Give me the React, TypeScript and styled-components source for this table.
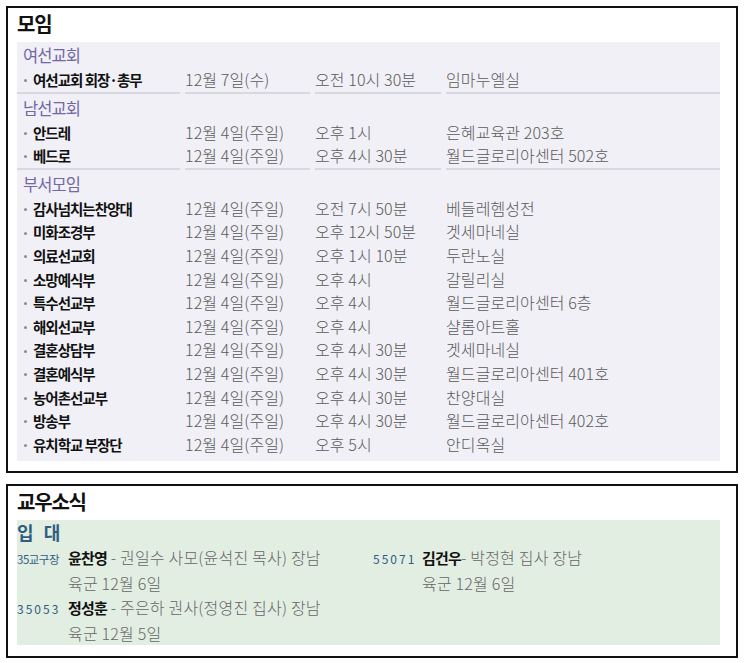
import React from "react";
import styled, { createGlobalStyle } from "styled-components";

const GlobalStyle = createGlobalStyle`
  body {
    margin: 0;
    padding: 6px 7px 6px 6px;
    background: #fff;
    font-family: "Noto Sans CJK KR", "Noto Sans", sans-serif;
  }
`;

const Page = styled.div`
  display: flex;
  flex-direction: column;
  gap: 11px;
  width: 732px;
`;

const Box = styled.section<{ $bottom: number }>`
  border: 2px solid #111;
  padding: 0 16px ${(p) => p.$bottom}px 9px;
`;

const Title = styled.h2`
  margin: 0 0 2px;
  font-size: 20px;
  font-weight: 700;
  line-height: 32px;
  letter-spacing: -1.2px;
  color: #111;
`;

/* 모임 table */
const SchedulePanel = styled.div`
  background: #f0f0f6;
  padding-bottom: 4px;
`;

const Group = styled.div`
  margin-bottom: 1px;
`;

const GroupHead = styled.div`
  height: 26px;
  line-height: 26px;
  padding-left: 6px;
  font-size: 16.5px;
  letter-spacing: -0.9px;
  color: #7367a6;
`;

const Row = styled.div`
  display: grid;
  grid-template-columns: 163px 125px 126px 1fr;
  column-gap: 5px;
`;

const Cell = styled.div<{ $line: boolean }>`
  font-size: 16px;
  font-weight: 300;
  line-height: 23.6px;
  color: #5a5a5a;
  white-space: nowrap;
  letter-spacing: 0.1px;
  border-bottom: ${(p) => (p.$line ? "2px solid #d8d8e0" : "none")};
`;

const NameCell = styled(Cell)`
  display: flex;
  align-items: center;
  padding-left: 7px;
  font-size: 14.5px;
  font-weight: 700;
  color: #111;
  letter-spacing: -1px;

  &::before {
    content: "";
    flex: none;
    width: 3px;
    height: 3px;
    margin: 2px 6px 0 0;
    border-radius: 50%;
    background: #8a8a92;
  }
`;

/* 교우소식 */
const NewsPanel = styled.div`
  background: #e3eee3;
  display: grid;
  grid-template-columns: 356px 1fr;
  align-items: start;
`;

const NewsHead = styled.div`
  grid-column: 1 / -1;
  height: 25px;
  line-height: 25px;
  font-size: 18px;
  font-weight: 700;
  word-spacing: 6px;
  color: #2e5f80;
`;

const NewsColumn = styled.div`
  display: flex;
  flex-direction: column;
`;

const Entry = styled.div<{ $codeWidth: number }>`
  display: grid;
  grid-template-columns: ${(p) => p.$codeWidth}px 1fr;
  align-items: baseline;
  line-height: 24px;
  font-size: 16px;
  font-weight: 300;
  color: #666;
  white-space: nowrap;
  letter-spacing: 0.2px;
`;

const Code = styled.span<{ $compact?: boolean }>`
  font-size: ${(p) => (p.$compact ? 11.5 : 12)}px;
  font-weight: 400;
  letter-spacing: ${(p) => (p.$compact ? "-0.5px" : "2px")};
  color: #2e5f80;
`;

const Name = styled.b`
  font-size: 15px;
  font-weight: 700;
  color: #111;
  letter-spacing: -0.8px;
`;

const Detail = styled.span`
  grid-column: 2;
`;

type Meeting = [string, string, string, string];

const groups: { head: string; rows: Meeting[] }[] = [
  {
    head: "여선교회",
    rows: [["여선교회 회장·총무", "12월 7일(수)", "오전 10시 30분", "임마누엘실"]],
  },
  {
    head: "남선교회",
    rows: [
      ["안드레", "12월 4일(주일)", "오후 1시", "은혜교육관 203호"],
      ["베드로", "12월 4일(주일)", "오후 4시 30분", "월드글로리아센터 502호"],
    ],
  },
  {
    head: "부서모임",
    rows: [
      ["감사넘치는찬양대", "12월 4일(주일)", "오전 7시 50분", "베들레헴성전"],
      ["미화조경부", "12월 4일(주일)", "오후 12시 50분", "겟세마네실"],
      ["의료선교회", "12월 4일(주일)", "오후 1시 10분", "두란노실"],
      ["소망예식부", "12월 4일(주일)", "오후 4시", "갈릴리실"],
      ["특수선교부", "12월 4일(주일)", "오후 4시", "월드글로리아센터 6층"],
      ["해외선교부", "12월 4일(주일)", "오후 4시", "샬롬아트홀"],
      ["결혼상담부", "12월 4일(주일)", "오후 4시 30분", "겟세마네실"],
      ["결혼예식부", "12월 4일(주일)", "오후 4시 30분", "월드글로리아센터 401호"],
      ["농어촌선교부", "12월 4일(주일)", "오후 4시 30분", "찬양대실"],
      ["방송부", "12월 4일(주일)", "오후 4시 30분", "월드글로리아센터 402호"],
      ["유치학교 부장단", "12월 4일(주일)", "오후 5시", "안디옥실"],
    ],
  },
];

const App: React.FC = () => {
  return (
    <>
      <GlobalStyle />
      <Page>
        <Box $bottom={10}>
          <Title>모임</Title>
          <SchedulePanel>
            {groups.map((g, gi) => (
              <Group key={g.head}>
                <GroupHead>{g.head}</GroupHead>
                {g.rows.map((r, ri) => {
                  const line = gi < groups.length - 1 && ri === g.rows.length - 1;
                  return (
                    <Row key={r[0]}>
                      <NameCell $line={line}>{r[0]}</NameCell>
                      <Cell $line={line}>{r[1]}</Cell>
                      <Cell $line={line}>{r[2]}</Cell>
                      <Cell $line={line}>{r[3]}</Cell>
                    </Row>
                  );
                })}
              </Group>
            ))}
          </SchedulePanel>
        </Box>

        <Box $bottom={11}>
          <Title>교우소식</Title>
          <NewsPanel>
            <NewsHead>입 대</NewsHead>
            <NewsColumn>
              <Entry $codeWidth={51}>
                <Code $compact>35교구장</Code>
                <span>
                  <Name>윤찬영</Name> - 권일수 사모(윤석진 목사) 장남
                </span>
                <Detail>육군 12월 6일</Detail>
              </Entry>
              <Entry $codeWidth={51}>
                <Code>35053</Code>
                <span>
                  <Name>정성훈</Name> - 주은하 권사(정영진 집사) 장남
                </span>
                <Detail>육군 12월 5일</Detail>
              </Entry>
            </NewsColumn>
            <NewsColumn>
              <Entry $codeWidth={49}>
                <Code>55071</Code>
                <span>
                  <Name>김건우</Name>- 박정현 집사 장남
                </span>
                <Detail>육군 12월 6일</Detail>
              </Entry>
            </NewsColumn>
          </NewsPanel>
        </Box>
      </Page>
    </>
  );
};

export default App;
